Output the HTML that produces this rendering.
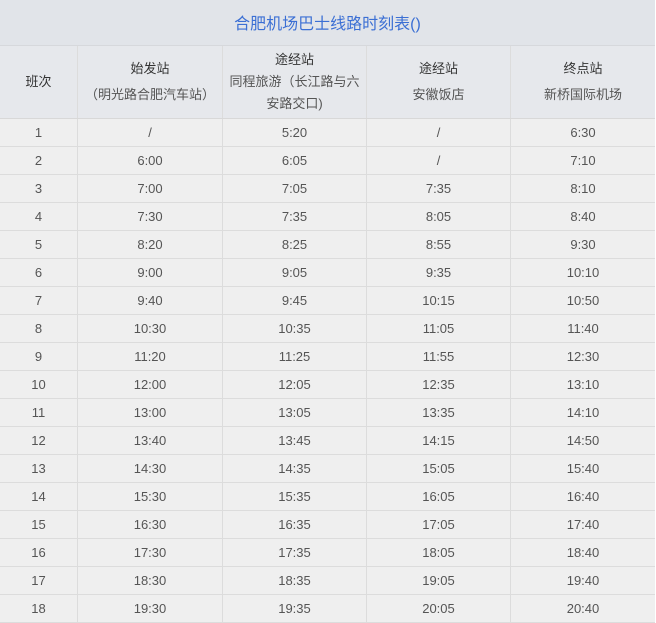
<!DOCTYPE html>
<html><head><meta charset="utf-8"><style>
html,body{margin:0;padding:0;background:#fff;width:656px;height:621px;overflow:hidden}
body{font-family:"Liberation Sans","Noto Sans CJK SC",sans-serif;}
.t{position:absolute;left:0;top:0;width:655px}
.title{height:46px;background:#e1e4e9;color:#3b6fd4;font-size:16px;text-align:center;line-height:50px;border-bottom:1px solid #d6d8dc;box-sizing:border-box}
.row{display:flex;height:28px;border-bottom:1px solid #dcdcdc;box-sizing:border-box;background:#efefef}
.hd{height:73px;background:#e6e8ec;border-bottom:1px solid #d8d8d8}
.c{box-sizing:border-box;border-right:1px solid #dcdcdc;text-align:center;color:#555;font-size:13px;line-height:27px}
.c:last-child{border-right:none}
.w0{width:78px}.w1{width:145px}.w2{width:144px}.w3{width:144px}.w4{width:144px}
.hd .c{display:flex;flex-direction:column;justify-content:center;line-height:22px;color:#555}
.hd .c b{font-weight:normal;color:#333}
</style></head><body><div class="t">
<div class="title">合肥机场巴士线路时刻表()</div>
<div class="row hd">
<div class="c w0"><b>班次</b></div>
<div class="c w1"><b>始发站</b><span style="margin-top:4px">（明光路合肥汽车站）</span></div>
<div class="c w2"><b>途经站</b><span>同程旅游（长江路与六<br>安路交口)</span></div>
<div class="c w3"><b>途经站</b><span style="margin-top:4px">安徽饭店</span></div>
<div class="c w4"><b>终点站</b><span style="margin-top:4px">新桥国际机场</span></div>
</div>
<div class="row"><div class="c w0">1</div><div class="c w1">/</div><div class="c w2">5:20</div><div class="c w3">/</div><div class="c w4">6:30</div></div>
<div class="row"><div class="c w0">2</div><div class="c w1">6:00</div><div class="c w2">6:05</div><div class="c w3">/</div><div class="c w4">7:10</div></div>
<div class="row"><div class="c w0">3</div><div class="c w1">7:00</div><div class="c w2">7:05</div><div class="c w3">7:35</div><div class="c w4">8:10</div></div>
<div class="row"><div class="c w0">4</div><div class="c w1">7:30</div><div class="c w2">7:35</div><div class="c w3">8:05</div><div class="c w4">8:40</div></div>
<div class="row"><div class="c w0">5</div><div class="c w1">8:20</div><div class="c w2">8:25</div><div class="c w3">8:55</div><div class="c w4">9:30</div></div>
<div class="row"><div class="c w0">6</div><div class="c w1">9:00</div><div class="c w2">9:05</div><div class="c w3">9:35</div><div class="c w4">10:10</div></div>
<div class="row"><div class="c w0">7</div><div class="c w1">9:40</div><div class="c w2">9:45</div><div class="c w3">10:15</div><div class="c w4">10:50</div></div>
<div class="row"><div class="c w0">8</div><div class="c w1">10:30</div><div class="c w2">10:35</div><div class="c w3">11:05</div><div class="c w4">11:40</div></div>
<div class="row"><div class="c w0">9</div><div class="c w1">11:20</div><div class="c w2">11:25</div><div class="c w3">11:55</div><div class="c w4">12:30</div></div>
<div class="row"><div class="c w0">10</div><div class="c w1">12:00</div><div class="c w2">12:05</div><div class="c w3">12:35</div><div class="c w4">13:10</div></div>
<div class="row"><div class="c w0">11</div><div class="c w1">13:00</div><div class="c w2">13:05</div><div class="c w3">13:35</div><div class="c w4">14:10</div></div>
<div class="row"><div class="c w0">12</div><div class="c w1">13:40</div><div class="c w2">13:45</div><div class="c w3">14:15</div><div class="c w4">14:50</div></div>
<div class="row"><div class="c w0">13</div><div class="c w1">14:30</div><div class="c w2">14:35</div><div class="c w3">15:05</div><div class="c w4">15:40</div></div>
<div class="row"><div class="c w0">14</div><div class="c w1">15:30</div><div class="c w2">15:35</div><div class="c w3">16:05</div><div class="c w4">16:40</div></div>
<div class="row"><div class="c w0">15</div><div class="c w1">16:30</div><div class="c w2">16:35</div><div class="c w3">17:05</div><div class="c w4">17:40</div></div>
<div class="row"><div class="c w0">16</div><div class="c w1">17:30</div><div class="c w2">17:35</div><div class="c w3">18:05</div><div class="c w4">18:40</div></div>
<div class="row"><div class="c w0">17</div><div class="c w1">18:30</div><div class="c w2">18:35</div><div class="c w3">19:05</div><div class="c w4">19:40</div></div>
<div class="row"><div class="c w0">18</div><div class="c w1">19:30</div><div class="c w2">19:35</div><div class="c w3">20:05</div><div class="c w4">20:40</div></div>
</div></body></html>
